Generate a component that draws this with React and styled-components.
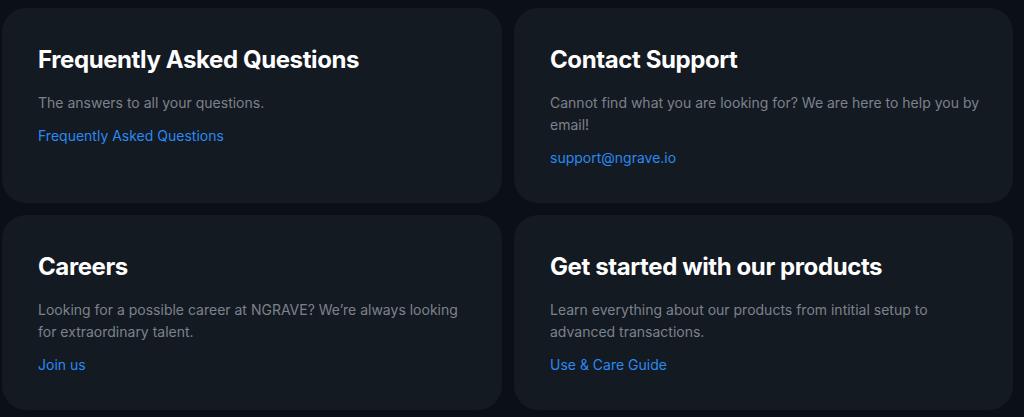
import React from 'react';
import styled, { createGlobalStyle } from 'styled-components';

const GlobalStyle = createGlobalStyle`
  html, body {
    margin: 0;
    padding: 0;
    background: #0b0f16;
  }
  body {
    font-family: Inter, "Noto Sans", sans-serif;
    -webkit-font-smoothing: antialiased;
  }
`;

const Grid = styled.section`
  display: grid;
  grid-template-columns: 500px 499px;
  grid-auto-rows: 195px;
  gap: 12px;
  padding: 8px 0 0 2px;
`;

const Card = styled.article`
  background: #141a22;
  border-radius: 24px;
  padding: 36px 20px 0 36px;
  box-sizing: border-box;
`;

const Title = styled.h2`
  margin: 0 0 16px;
  font-size: 24px;
  line-height: 32px;
  font-weight: 700;
  letter-spacing: -0.4px;
  color: #ffffff;
`;

const Text = styled.p`
  margin: 0 0 11px;
  font-size: 14px;
  line-height: 22px;
  color: #7c828b;
  max-width: ${(p) => p.$width || 440}px;
`;

const CardLink = styled.a`
  display: block;
  font-size: 14px;
  line-height: 22px;
  color: #2a89f2;
  text-decoration: none;
`;

const cards = [
  {
    title: 'Frequently Asked Questions',
    text: 'The answers to all your questions.',
    link: 'Frequently Asked Questions',
  },
  {
    title: 'Contact Support',
    text: 'Cannot find what you are looking for? We are here to help you by email!',
    link: 'support@ngrave.io',
  },
  {
    title: 'Careers',
    text: 'Looking for a possible career at NGRAVE? We\u2019re always looking for extraordinary talent.',
    link: 'Join us',
  },
  {
    title: 'Get started with our products',
    text: 'Learn everything about our products from intitial setup to advanced transactions.',
    link: 'Use & Care Guide',
    width: 400,
  },
];

export default function App() {
  return (
    <>
      <GlobalStyle />
      <Grid>
        {cards.map((c) => (
          <Card key={c.title}>
            <Title>{c.title}</Title>
            <Text $width={c.width}>{c.text}</Text>
            <CardLink href="#">{c.link}</CardLink>
          </Card>
        ))}
      </Grid>
    </>
  );
}
